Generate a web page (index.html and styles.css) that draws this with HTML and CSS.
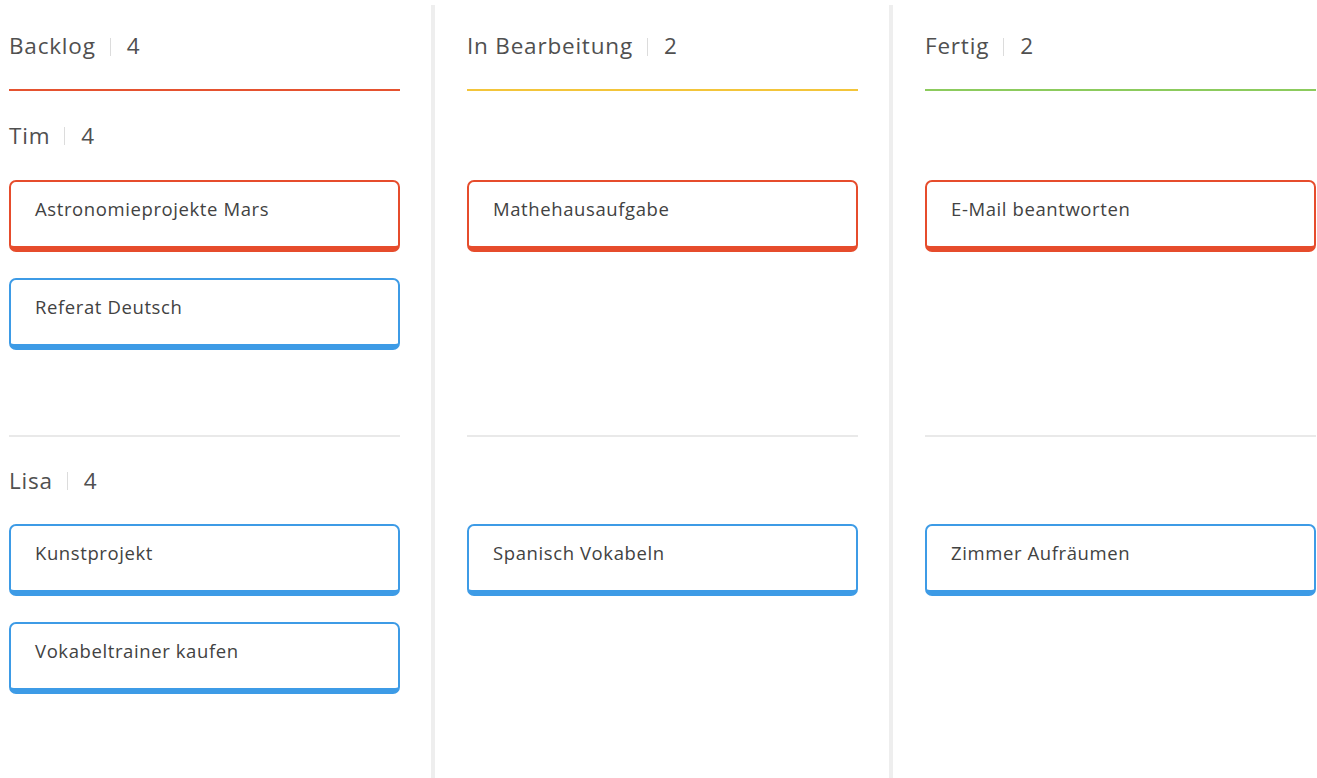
FILE: index.html
```html
<!DOCTYPE html>
<html lang="de">
<head>
<meta charset="utf-8">
<title>Kanban</title>
<link rel="stylesheet" href="styles.css">
</head>
<body>
<div class="board">
  <section class="column">
    <header class="column-head red"><span class="title">Backlog</span><span class="sep"></span><span class="count">4</span></header>
    <div class="lane">
      <div class="lane-head"><span class="title">Tim</span><span class="sep"></span><span class="count">4</span></div>
      <div class="cards">
        <div class="card red">Astronomieprojekte Mars</div>
        <div class="card blue">Referat Deutsch</div>
      </div>
    </div>
    <div class="lane">
      <div class="lane-head"><span class="title">Lisa</span><span class="sep"></span><span class="count">4</span></div>
      <div class="cards">
        <div class="card blue">Kunstprojekt</div>
        <div class="card blue">Vokabeltrainer kaufen</div>
      </div>
    </div>
  </section>
  <div class="divider"></div>
  <section class="column">
    <header class="column-head yellow"><span class="title">In Bearbeitung</span><span class="sep"></span><span class="count">2</span></header>
    <div class="lane">
      <div class="lane-head"></div>
      <div class="cards">
        <div class="card red">Mathehausaufgabe</div>
      </div>
    </div>
    <div class="lane">
      <div class="lane-head"></div>
      <div class="cards">
        <div class="card blue">Spanisch Vokabeln</div>
      </div>
    </div>
  </section>
  <div class="divider"></div>
  <section class="column">
    <header class="column-head green"><span class="title">Fertig</span><span class="sep"></span><span class="count">2</span></header>
    <div class="lane">
      <div class="lane-head"></div>
      <div class="cards">
        <div class="card red">E-Mail beantworten</div>
      </div>
    </div>
    <div class="lane">
      <div class="lane-head"></div>
      <div class="cards">
        <div class="card blue">Zimmer Aufräumen</div>
      </div>
    </div>
  </section>
</div>
</body>
</html>
```

FILE: styles.css
```css
html, body {
  margin: 0;
  padding: 0;
  background: #ffffff;
  height: 100%;
  overflow: hidden;
}

body {
  font-family: "Open Sans", "Noto Sans", sans-serif;
  color: #505050;
}

.board {
  display: flex;
  padding-left: 9px;
  height: 778px;
}

.column {
  width: 391px;
  flex: none;
}

.divider {
  width: 4px;
  flex: none;
  margin: 5px 32px 0 31px;
  background: #eeeeee;
}

/* column header with coloured underline */
.column-head {
  height: 91px;
  box-sizing: border-box;
  padding-top: 29px;
  display: flex;
  align-items: flex-start;
  font-size: 22.5px;
  line-height: 34px;
  letter-spacing: 0.8px;
  border-bottom: 2px solid #e5522f;
}
.column-head.yellow { border-bottom-color: #f3c53a; }
.column-head.green { border-bottom-color: #8ccb5d; }

.sep {
  width: 1px;
  height: 18px;
  background: #dcdcdc;
  margin: 9px 16px 0 14px;
}

.lane {
  height: 344px;
}
.lane + .lane {
  border-top: 2px solid #e9e9e9;
}

.lane-head {
  height: 89px;
  display: flex;
  align-items: center;
  font-size: 22.5px;
  letter-spacing: 0.8px;
  line-height: 34px;
}
.lane + .lane .lane-head {
  height: 87px;
}
.lane-head .sep {
  margin-top: 0;
}

.cards {
  display: flex;
  flex-direction: column;
  gap: 26px;
}

.card {
  height: 72px;
  box-sizing: border-box;
  border: 2px solid #3d9be6;
  border-bottom-width: 6px;
  border-radius: 7px;
  padding: 15px 20px 0 24px;
  font-size: 18.5px;
  line-height: 24px;
  letter-spacing: 0.6px;
  color: #424242;
}
.card.red { border-color: #e64c2c; }
.card.blue { border-color: #3d9be6; }
```
